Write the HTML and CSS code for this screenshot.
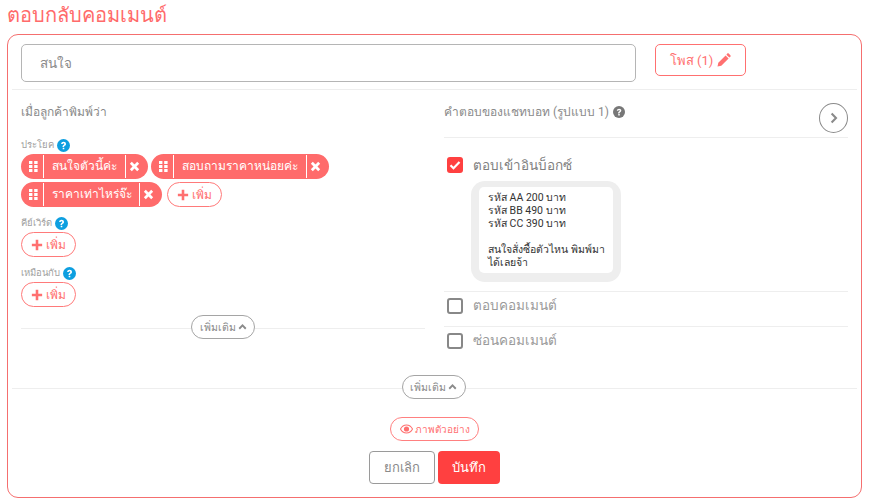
FILE: index.html
```html
<!DOCTYPE html>
<html lang="th">
<head>
<meta charset="utf-8">
<title>ตอบกลับคอมเมนต์</title>
<link rel="stylesheet" href="styles.css">
</head>
<body>
<svg class="defs" width="0" height="0" aria-hidden="true">
  <symbol id="q" viewBox="0 0 24 24"><circle cx="12" cy="12" r="12" fill="currentColor"/><path d="M7.6 9.4c.2-2.6 2.2-4.1 4.6-4.1 2.500 0 4.400 1.500 4.400 3.800 0 1.800-1 2.700-2.200 3.500-1 .6-1.300 1-1.300 1.900v.4h-3v-.8c0-1.600.7-2.400 1.900-3.200 1-.6 1.500-1 1.500-1.700 0-.8-.6-1.300-1.400-1.300-.9 0-1.500.6-1.600 1.500z" fill="#fff"/><rect x="10.500" y="16" width="3" height="3" rx=".5" fill="#fff"/></symbol>
  <symbol id="plus" viewBox="0 0 14 14"><path d="M7 1v12M1 7h12" stroke="currentColor" stroke-width="3" fill="none"/></symbol>
  <symbol id="x" viewBox="0 0 12 12"><path d="M2 2l8 8M10 2l-8 8" stroke="#fff" stroke-width="3" fill="none"/></symbol>
  <symbol id="grip" viewBox="0 0 9 11"><g fill="#fff"><rect width="3.400" height="3"/><rect x="5.200" width="3.400" height="3"/><rect y="4" width="3.400" height="3"/><rect x="5.200" y="4" width="3.400" height="3"/><rect y="8" width="3.400" height="3"/><rect x="5.200" y="8" width="3.400" height="3"/></g></symbol>
  <symbol id="up" viewBox="0 0 10 7"><path d="M1.200 5.500L5 1.700l3.800 3.800" stroke="currentColor" stroke-width="2.200" fill="none"/></symbol>
</svg>
<main class="page">
  <h1 class="title">ตอบกลับคอมเมนต์</h1>
  <section class="card">
    <div class="top">
      <div class="name-input">สนใจ</div>
      <button class="post-btn">โพส (1)
        <svg class="pencil" viewBox="0 0 14 14" width="14" height="14"><path d="M0.500 13.500l.8-3.800 7.300-7.300 3 3-7.300 7.300zM9.400 1.700l.9-1.100c.4-.4 1-.4 1.400 0l1.700 1.700c.4.4.4 1 0 1.400l-1.100.9z" fill="currentColor"/></svg>
      </button>
    </div>
    <div class="columns">
      <div class="col-left">
        <div class="col-title">เมื่อลูกค้าพิมพ์ว่า</div>
        <div class="field-label first">ประโยค <svg class="q"><use href="#q"/></svg></div>
        <div class="chips">
          <span class="chip"><span class="grip"><svg width="9" height="11"><use href="#grip"/></svg></span><span class="chip-text w1">สนใจตัวนี้ค่ะ</span><span class="chip-x"><svg width="11" height="11"><use href="#x"/></svg></span></span>
          <span class="chip"><span class="grip"><svg width="9" height="11"><use href="#grip"/></svg></span><span class="chip-text w2">สอบถามราคาหน่อยค่ะ</span><span class="chip-x"><svg width="11" height="11"><use href="#x"/></svg></span></span>
          <span class="chip"><span class="grip"><svg width="9" height="11"><use href="#grip"/></svg></span><span class="chip-text w3">ราคาเท่าไหร่จ๊ะ</span><span class="chip-x"><svg width="11" height="11"><use href="#x"/></svg></span></span>
          <button class="add gap-left"><svg width="12" height="12"><use href="#plus"/></svg>เพิ่ม</button>
        </div>
        <div class="field-label">คีย์เวิร์ด <svg class="q"><use href="#q"/></svg></div>
        <div class="chips"><button class="add"><svg width="12" height="12"><use href="#plus"/></svg>เพิ่ม</button></div>
        <div class="field-label">เหมือนกับ <svg class="q"><use href="#q"/></svg></div>
        <div class="chips"><button class="add"><svg width="12" height="12"><use href="#plus"/></svg>เพิ่ม</button></div>
        <div class="rule-more inner"><button class="more">เพิ่มเติม <svg width="9" height="6"><use href="#up"/></svg></button></div>
      </div>
      <div class="col-right">
        <div class="right-head">
          <div class="col-title">คำตอบของแชทบอท (รูปแบบ 1) <svg class="q grey"><use href="#q"/></svg></div>
          <button class="next"><svg viewBox="0 0 10 14" width="8" height="12"><path d="M2 1.500L7.500 7 2 12.500" stroke="#8a8a8a" stroke-width="2.600" fill="none"/></svg></button>
        </div>
        <div class="option checked-row">
          <span class="box on"><svg viewBox="0 0 16 16" width="16" height="16"><path d="M3.500 8.200l3 3 6-6.200" stroke="#fff" stroke-width="2.200" fill="none"/></svg></span>
          <span class="opt-text dark">ตอบเข้าอินบ็อกซ์</span>
        </div>
        <div class="bubble-wrap">
          <div class="bubble">รหัส AA 200 บาท<br>รหัส BB 490 บาท<br>รหัส CC 390 บาท<br><br>สนใจสั่งซื้อตัวไหน พิมพ์มา<br>ได้เลยจ้า</div>
        </div>
        <div class="option line"><span class="box"></span><span class="opt-text">ตอบคอมเมนต์</span></div>
        <div class="option line"><span class="box"></span><span class="opt-text">ซ่อนคอมเมนต์</span></div>
      </div>
    </div>
    <div class="rule-more outer"><button class="more">เพิ่มเติม <svg width="9" height="6"><use href="#up"/></svg></button></div>
    <div class="preview-row">
      <button class="preview">
        <svg viewBox="0 0 16 12" width="13" height="10"><path d="M8 1C4.800 1 2.200 2.900.6 6c1.600 3.100 4.200 5 7.400 5s5.800-1.900 7.400-5C13.800 2.900 11.200 1 8 1z" fill="none" stroke="currentColor" stroke-width="1.300"/><circle cx="8" cy="6" r="3.200" fill="currentColor"/></svg>
        ภาพตัวอย่าง</button>
    </div>
    <div class="actions">
      <button class="cancel">ยกเลิก</button>
      <button class="save">บันทึก</button>
    </div>
  </section>
</main>
</body>
</html>
```
FILE: styles.css
```css
* { box-sizing: border-box; }
html, body { margin: 0; padding: 0; background: #fff; }
body { font-family: Roboto, "Noto Sans", "Liberation Sans", sans-serif; color: #8a8a8a; overflow: hidden; }
button { font-family: inherit; background: #fff; padding: 0; cursor: pointer; }
.defs { position: absolute; }
.page { width: 871px; height: 502px; padding: 0 10px 0 7px; }
.title { margin: 0; height: 34px; font-size: 20px; line-height: 30px; font-weight: 400; color: #ff6b6b; }
.card { width: 855px; height: 464px; border: 1px solid #f56f6f; border-radius: 11px; padding: 9px 4px 0; }
.top { display: flex; align-items: flex-start; padding: 0 0 7px 9px; height: 46px; border-bottom: 1px solid #eee; }
.name-input { width: 615px; height: 38px; border: 1px solid #b5b5b5; border-radius: 5px; padding-left: 18px; font-size: 13.500px; line-height: 36px; color: #8a8a8a; }
.post-btn { margin-left: 19px; width: 91px; height: 32px; border: 1px solid #ff7070; border-radius: 5px; color: #ff7070; font-size: 13px; display: flex; align-items: center; justify-content: center; gap: 4px; }
.columns { display: flex; height: 285px; padding-left: 9px; }
.col-left { width: 404px; position: relative; padding-top: 13px; }
.col-right { width: 404px; margin-left: 19px; }
.col-title { font-size: 12px; line-height: 18px; color: #8a8a8a; display: flex; align-items: center; gap: 4px; }
.field-label { font-size: 9.500px; line-height: 14px; color: #a0a0a0; display: flex; align-items: center; gap: 3px; margin: 9px 0 2px; height: 14px; }
.field-label.first { margin-top: 17px; }
.q { width: 13px; height: 13px; color: #0d9fe0; }
.q.grey { width: 12px; height: 12px; color: #777; }
.chips { display: flex; flex-wrap: wrap; gap: 3px; max-width: 330px; }
.chip { height: 25px; background: #ff6b6b; border-radius: 13px; display: flex; align-items: center; color: #fff; font-size: 12px; }
.grip { width: 23px; height: 23px; display: flex; align-items: center; justify-content: center; border-right: 1px solid #fff; padding-left: 2px; }
.chip-text { text-align: center; height: 23px; line-height: 23px; border-right: 1px solid #fff; white-space: nowrap; overflow: hidden; }
.w1 { width: 82px; }
.w2 { width: 133px; }
.w3 { width: 96px; }
.chip-x { width: 22px; display: flex; justify-content: center; padding-right: 5px; }
.add { height: 25px; width: 55px; border: 1px solid #ff7a7a; border-radius: 13px; color: #ff7070; font-size: 12px; display: flex; align-items: center; justify-content: center; gap: 3px; }
.gap-left { margin-left: 2px; }
.rule-more { display: flex; justify-content: center; align-items: center; position: relative; }
.rule-more::before { content: ""; position: absolute; left: 0; right: 0; top: 13px; border-top: 1px solid #eee; }
.rule-more.inner { position: absolute; left: 0; right: 0; top: 225px; height: 24px; }
.more { position: relative; height: 24px; width: 64px; border: 1px solid #a5a5a5; border-radius: 12px; font-size: 10.500px; color: #8a8a8a; display: flex; align-items: center; justify-content: center; gap: 2px; }
.right-head { display: flex; justify-content: space-between; align-items: flex-start; height: 48px; padding-top: 13px; border-bottom: 1px solid #eee; }
.next { width: 29px; height: 30px; border: 1px solid #8a8a8a; border-radius: 50%; display: flex; align-items: center; justify-content: center; }
.option { display: flex; align-items: flex-start; height: 35px; padding: 6px 0 0 3px; gap: 10px; }
.option.line { border-top: 1px solid #eee; }
.checked-row { height: 43px; padding-top: 19px; }
.box { width: 16px; height: 16px; border: 2px solid #888; border-radius: 3px; display: block; flex: none; }
.box.on { border: 0; background: #ff4040; }
.box.on svg { display: block; }
.opt-text { font-size: 13.500px; line-height: 14px; color: #9a9a9a; }
.opt-text.dark { color: #808080; line-height: 16px; }
.bubble-wrap { margin: 0 0 9px 27px; width: 150px; height: 101px; background: #eee; border-radius: 14px; padding: 6px 8px 0; }
.bubble { height: 86px; background: #fff; border-radius: 5px; padding: 4px 2px 0 9px; font-size: 10.500px; line-height: 13px; color: #333; }
.rule-more.outer { height: 24px; }
.rule-more.outer .more { width: 64px; margin-right: 2px; }
.preview-row { display: flex; justify-content: center; margin-top: 18px; }
.preview { width: 89px; height: 24px; border: 1px solid #ff8080; border-radius: 12px; color: #ff7070; font-size: 10px; display: flex; align-items: center; justify-content: center; gap: 2px; }
.actions { display: flex; justify-content: center; gap: 3px; margin-top: 10px; }
.cancel { width: 66px; height: 33px; border: 1px solid #9a9a9a; border-radius: 4px; color: #8a8a8a; font-size: 13px; }
.save { width: 62px; height: 33px; border: 0; border-radius: 4px; background: #ff4040; color: #fff; font-size: 13px; }
```
